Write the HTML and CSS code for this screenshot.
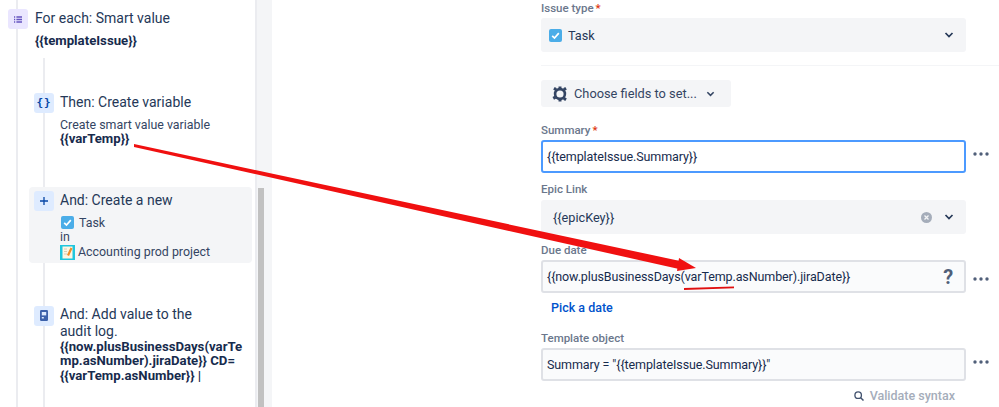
FILE: index.html
```html
<!DOCTYPE html>
<html lang="en">
<head>
<meta charset="UTF-8" />
<meta name="viewport" content="width=device-width, initial-scale=1" />
<title>Automation rule</title>
<link rel="stylesheet" href="styles.css">
</head>
<body>

<div class="page">
  <aside class="rail">
    <div class="rail-inner">
      <div class="step step-top">
        <span class="step-icon icon-purple">
          <svg width="8" height="7" viewBox="0 0 8 7"><path d="M0 1h1.2M2.4 1H8M0 3.5h1.2M2.4 3.5H8M0 6h1.2M2.4 6H8" stroke="#6554c0" stroke-width="1.3" fill="none"/></svg>
        </span>
        <div class="step-body">
          <div class="step-title">For each: Smart value</div>
          <div class="step-code step-code-gap">{{templateIssue}}</div>
        </div>
      </div>

      <div class="branch">
        <div class="step step-var">
          <span class="step-icon icon-blue icon-braces">{}</span>
          <div class="step-body">
            <div class="step-title">Then: Create variable</div>
            <div class="step-text step-text-gap">Create smart value variable</div>
            <div class="step-code">{{varTemp}}</div>
          </div>
        </div>

        <div class="step step-card">
          <span class="step-icon icon-blue">
            <svg width="8" height="8" viewBox="0 0 8 8"><path d="M4 0v8M0 4h8" stroke="#0747a6" stroke-width="1.3" fill="none"/></svg>
          </span>
          <div class="step-body">
            <div class="step-title">And: Create a new</div>
            <div class="step-text step-line step-text-gap">
              <svg class="task-small" width="13" height="13" viewBox="0 0 13 13"><rect width="13" height="13" rx="2" fill="#4bade8"/><path d="M3.2 6.8l2.3 2.3 4.3-5" stroke="#fff" stroke-width="1.7" fill="none"/></svg>
              Task
            </div>
            <div class="step-text">in</div>
            <div class="step-text step-line">
              <svg width="15" height="15" viewBox="0 0 15 15"><rect width="15" height="15" fill="#1fc6de"/><rect x="2.5" y="1.5" width="10" height="12" fill="#fdf6e3"/><path d="M4 4h3M4 6.5h3M4 9h3" stroke="#c9c2b0" stroke-width=".8"/><path d="M11.5 3L8 10.5" stroke="#f28c28" stroke-width="2.2"/></svg>
              Accounting prod project
            </div>
          </div>
        </div>

        <div class="step step-audit">
          <span class="step-icon icon-blue">
            <svg width="8" height="11" viewBox="0 0 8 11"><rect width="8" height="11" rx="1.2" fill="#3d62ab"/><rect x="1.8" y="2" width="4.4" height="3.4" fill="#deebff"/><rect x="1.8" y="7" width="2" height="1.5" fill="#deebff"/></svg>
          </span>
          <div class="step-body">
            <div class="step-title step-title-wrap">And: Add value to the audit log.</div>
            <div class="step-code step-code-break">{{now.plusBusinessDays(varTemp.asNumber).jiraDate}} CD= {{varTemp.asNumber}} |</div>
          </div>
        </div>
      </div>
    </div>
    <div class="scroll-track"><div class="scroll-thumb"></div></div>
  </aside>

  <main class="form">
    <div class="field-label label-first">Issue type<span class="req">*</span></div>
    <div class="field-row">
      <div class="select">
        <svg width="13" height="13" viewBox="0 0 13 13"><rect width="13" height="13" rx="2" fill="#4bade8"/><path d="M3.2 6.8l2.3 2.3 4.3-5" stroke="#fff" stroke-width="1.7" fill="none"/></svg>
        <span class="select-text">Task</span>
        <svg width="10" height="6" viewBox="0 0 10 6"><path d="M1.5 1L5 4.5 8.5 1" stroke="#253858" stroke-width="1.7" fill="none"/></svg>
      </div>
    </div>

    <hr class="divider">

    <button class="choose-btn">
      <svg width="16" height="16" viewBox="0 0 16 16"><circle cx="8" cy="8" r="4.9" fill="none" stroke="#344563" stroke-width="2.6"/><path d="M6.5.5h3V3h-3zM6.5 13h3v2.5h-3zM1.2 3.6L2.7 1l2.2 1.3-1.5 2.6zM11.1 13.7l1.5-2.6 2.2 1.3-1.5 2.6zM.5 11.1l2.2-1.3 1.5 2.6-2.2 1.3zM11.1 2.3L13.3 1l1.5 2.6-2.2 1.3z" fill="#344563"/></svg>
      <span>Choose fields to set...</span>
      <svg width="9" height="6" viewBox="0 0 10 6"><path d="M1.5 1L5 4.5 8.5 1" stroke="#344563" stroke-width="1.7" fill="none"/></svg>
    </button>

    <div class="field-label label-summary">Summary<span class="req">*</span></div>
    <div class="field-row">
      <div class="input input-focus">{{templateIssue.Summary}}</div>
      <svg class="more" width="16" height="4" viewBox="0 0 16 4"><circle cx="2" cy="2" r="1.7"/><circle cx="8" cy="2" r="1.7"/><circle cx="14" cy="2" r="1.7"/></svg>
    </div>

    <div class="field-label label-epic">Epic Link</div>
    <div class="field-row">
      <div class="select select-epic">
        <span class="select-text">{{epicKey}}</span>
        <svg class="clear" width="11" height="11" viewBox="0 0 11 11"><circle cx="5.5" cy="5.5" r="5.5" fill="#a5adba"/><path d="M3.5 3.5l4 4M7.5 3.5l-4 4" stroke="#f4f5f7" stroke-width="1.3"/></svg>
        <svg width="10" height="6" viewBox="0 0 10 6"><path d="M1.5 1L5 4.5 8.5 1" stroke="#253858" stroke-width="1.7" fill="none"/></svg>
      </div>
    </div>

    <div class="field-label label-due">Due date</div>
    <div class="field-row">
      <div class="input">
        <span>{{now.plusBusinessDays(varTemp.asNumber).jiraDate}}</span>
        <span class="help">?</span>
      </div>
      <svg class="more more-low" width="16" height="4" viewBox="0 0 16 4"><circle cx="2" cy="2" r="1.7"/><circle cx="8" cy="2" r="1.7"/><circle cx="14" cy="2" r="1.7"/></svg>
    </div>
    <a class="pick-link" href="#">Pick a date</a>

    <div class="field-label label-template">Template object</div>
    <div class="field-row">
      <div class="input">Summary = "{{templateIssue.Summary}}"</div>
      <svg class="more" width="16" height="4" viewBox="0 0 16 4"><circle cx="2" cy="2" r="1.7"/><circle cx="8" cy="2" r="1.7"/><circle cx="14" cy="2" r="1.7"/></svg>
    </div>
    <div class="validate">
      <svg width="10" height="10" viewBox="0 0 12 12"><circle cx="5" cy="5" r="3.9" fill="none" stroke="#42526e" stroke-width="1.6"/><path d="M8 8l3.4 3.4" stroke="#42526e" stroke-width="1.8"/></svg>
      <span>Validate syntax</span>
    </div>
  </main>
</div>

<!-- seta vermelha por cima da tela -->
<svg class="overlay" width="999" height="407" viewBox="0 0 999 407">
  <path d="M134 144L680 261L679 269L134 147z" fill="#f01010"/>
  <path d="M679 258L696 268L677 271z" fill="#f01010"/>
  <path d="M684 289L734 287.3" stroke="#e01010" stroke-width="1.8" fill="none"/>
</svg>

</body>
</html>
```

FILE: styles.css
```css
* {
  box-sizing: border-box;
}
body {
  margin: 0;
  background: #fff;
  font-family: "Roboto", "Liberation Sans", sans-serif;
  color: #172b4d;
  overflow: hidden;
}
.page {
  display: flex;
  height: 407px;
  overflow: hidden;
}
/* Painel esquerdo */
.rail {
  width: 272px;
  padding-left: 16px;
  display: flex;
  flex-shrink: 0;
}
.rail-inner {
  width: 241px;
  border-left: 2px solid #ebecf0;
  border-right: 2px solid #ebecf0;
  padding-top: 9px;
  display: flex;
  flex-direction: column;
}
.scroll-track {
  width: 15px;
  background: #f4f5f7;
  padding: 188px 8px 0 1px;
}
.scroll-thumb {
  height: 219px;
  background: #c1c1c1;
}
.step {
  display: flex;
  gap: 6px;
}
.step-top {
  margin-left: -10px;
  gap: 7px;
}
.step-icon {
  width: 20px;
  height: 20px;
  flex-shrink: 0;
  border-radius: 3px;
  display: flex;
  align-items: center;
  justify-content: center;
}
.icon-purple {
  background: #eae6ff;
}
.icon-blue {
  background: #deebff;
}
.icon-braces {
  color: #0747a6;
  font-family: "DejaVu Sans Mono", monospace;
  font-size: 11px;
  font-weight: 700;
  letter-spacing: 1px;
}
.step-title {
  font-size: 14px;
  line-height: 18px;
  color: #253858;
}
.step-title-wrap {
  width: 150px;
  line-height: 17px;
}
.step-text {
  font-size: 12.4px;
  line-height: 14.5px;
  color: #344563;
}
.step-text-gap {
  margin-top: 7px;
}
.step-code {
  font-size: 13.2px;
  line-height: 14.5px;
  font-weight: 700;
  color: #172b4d;
}
.step-code-gap {
  margin-top: 7px;
}
.step-code-break {
  overflow-wrap: break-word;
  width: 188px;
}
.step-line {
  display: flex;
  align-items: center;
  gap: 3px;
}
.task-small {
  margin: 0 2px 0 1px;
}
.branch {
  flex: 1;
  margin-top: 9px;
  margin-left: 25px;
  padding-top: 35px;
  border-left: 2px solid #ebecf0;
}
.step-var {
  margin-left: -11px;
}
.step-card {
  margin: 40px 3px 0 -16px;
  padding: 4px 5px 3px 5px;
  background: #f4f5f7;
  border-radius: 4px;
}
.step-audit {
  margin: 43px 0 0 -11px;
}
/* Formulario */
.form {
  margin-left: 269px;
  width: 458px;
  flex-shrink: 0;
}
.field-label {
  font-size: 11.5px;
  line-height: 14px;
  font-weight: 500;
  color: #6b778c;
}
.req {
  color: #de350b;
  margin-left: 2px;
}
.field-row {
  display: flex;
  align-items: center;
  gap: 7px;
}
.select {
  width: 425px;
  height: 34px;
  background: #f4f5f7;
  border-radius: 3px;
  padding: 0 12px 0 8px;
  display: flex;
  align-items: center;
  font-size: 12.7px;
  color: #253858;
}
.select-text {
  flex: 1;
  margin-left: 6px;
}
.select-epic {
  padding-left: 6px;
}
.clear {
  margin-right: 12px;
}
.divider {
  margin: 13px 0 14px;
  border: 0;
  border-top: 1px solid #f4f5f7;
}
.choose-btn {
  height: 27px;
  width: 190px;
  border: 0;
  border-radius: 3px;
  background: #f4f5f7;
  padding: 0 0 0 11px;
  display: flex;
  align-items: center;
  gap: 6px;
  font-family: inherit;
  font-size: 12.8px;
  color: #344563;
}
.choose-btn span {
  margin-right: 3px;
}
.label-first {
  margin-top: 1px;
  margin-bottom: 3px;
}
.label-summary {
  margin-top: 16px;
  margin-bottom: 3px;
}
.label-epic {
  margin-top: 9px;
  margin-bottom: 4px;
}
.label-due {
  margin-top: 9px;
  margin-bottom: 3px;
}
.label-template {
  margin-top: 15px;
  margin-bottom: 3px;
}
.input {
  width: 425px;
  height: 33px;
  background: #fafbfc;
  border: 2px solid #dfe1e6;
  border-radius: 3px;
  padding: 0 4px;
  display: flex;
  align-items: center;
  justify-content: space-between;
  font-size: 12.5px;
  letter-spacing: -0.1px;
  color: #172b4d;
}
.input-focus {
  background: #fff;
  border-color: #4c9aff;
}
.more {
  fill: #505f79;
  margin-bottom: 6px;
}
.more-low {
  margin-bottom: 0;
  margin-top: 4px;
}
.help {
  font-size: 20px;
  font-weight: 700;
  color: #505f79;
  margin-right: 7px;
}
.pick-link {
  display: block;
  margin: 7px 0 0 10px;
  font-size: 12.5px;
  line-height: 16px;
  font-weight: 500;
  color: #0052cc;
  text-decoration: none;
}
.validate {
  width: 414px;
  margin-top: 7px;
  display: flex;
  justify-content: flex-end;
  align-items: center;
  gap: 6px;
  font-size: 12.5px;
  font-weight: 500;
  color: #a5adba;
}
.overlay {
  position: absolute;
  left: 0;
  top: 0;
  pointer-events: none;
}
```
